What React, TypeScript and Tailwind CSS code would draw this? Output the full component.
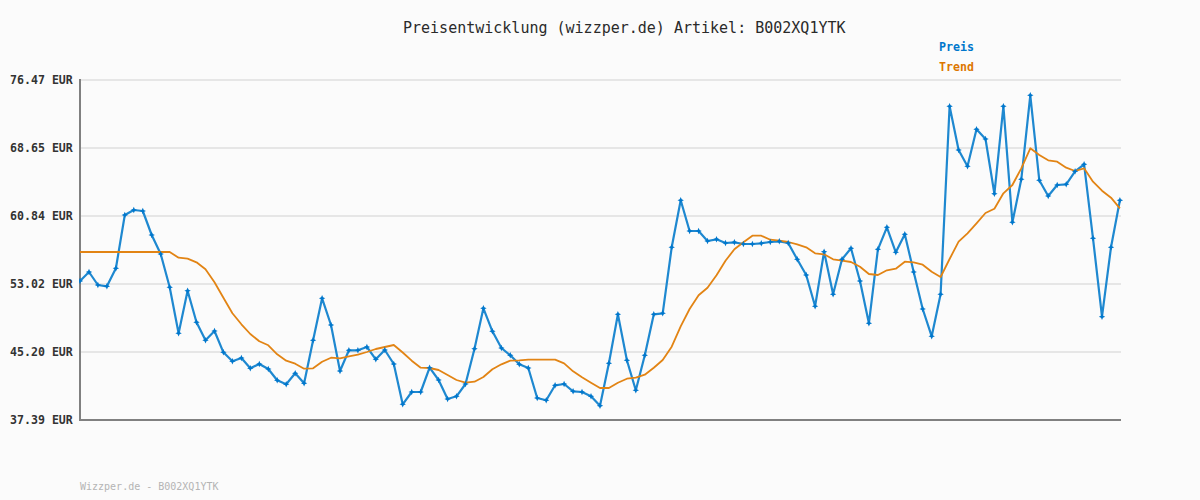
const priceY = [
  281, 272, 285, 286.3, 268.3, 215, 210, 211, 235, 254, 287.3, 333.3, 290.7, 322.3, 340.3, 331, 352.3, 361.3, 358, 368.3,
  364, 369, 380.3, 384.3, 373.3, 383.3, 340.3, 298.3, 325, 371, 350.3, 350.3, 347, 359.3, 350, 364, 404.3, 392, 392, 367.7,
  380, 399, 396.3, 384, 348.7, 308.3, 331.3, 348, 355.3, 364.3, 368, 398, 400.3, 385.3, 384, 391.3, 392, 396.3, 405.7, 363.3,
  314.3, 360.3, 390.3, 355.3, 314.3, 313.3, 247.3, 200.3, 231, 231, 241, 239.3, 243, 242.3, 244, 244, 243.3, 242, 241.3, 243,
  259.3, 275, 306.3, 251.7, 294.3, 259.3, 248.3, 281, 323.3, 249.3, 227.3, 252.3, 234.3, 272, 309, 336.3, 294.3, 106.3, 150, 166.3,
  129.3, 139, 193.7, 106.3, 222.3, 179.3, 95.3, 180.3, 196, 185, 184.3, 171.3, 164.3, 238.3, 316.7, 247.3, 200.3,
];

const trendY = [
  252, 252, 252, 252, 252, 252, 252, 252, 252, 252, 252, 257.7, 258.7, 262.3, 269.3, 282.3, 297.7, 313.3, 324.3, 334,
  341.3, 345.3, 354.3, 360.7, 363.7, 368.7, 368.3, 361.7, 357.7, 358.3, 356.3, 354.7, 352, 349, 347, 345, 352.5, 360.7, 367.7, 368,
  370, 375, 380, 382.7, 381.7, 377, 369.3, 364.3, 360.7, 360.3, 359.7, 359.7, 359.7, 359.7, 363.3, 371.3, 377.3, 382.7, 388, 388,
  382.7, 378.7, 377.7, 374.7, 367.7, 360, 346.7, 326.3, 309, 295.3, 287.7, 275.3, 260.7, 249.3, 242.3, 235.7, 235.7, 239.7, 240.7, 242,
  244.3, 247.3, 253.3, 254.3, 259.3, 260.7, 262, 266.7, 274, 275, 270.3, 268.7, 261.7, 262.3, 264.7, 271.7, 277, 259, 241.7, 233.3,
  223.3, 213, 208.7, 193.3, 185, 168.3, 148.3, 155, 160.3, 161.7, 167.7, 171, 168.3, 181.7, 190.7, 197.7, 208.3,
];

const gridLines = [80, 148, 216, 284, 352];
const axisLabels = ["76.47 EUR", "68.65 EUR", "60.84 EUR", "53.02 EUR", "45.20 EUR", "37.39 EUR"];

const xAt = (i: number) => 80 + i * 8.965;
const toPoints = (ys: number[]) => ys.map((y, i) => `${xAt(i).toFixed(1)},${y}`).join(" ");

function PriceChart() {
  return (
    <svg width={1045} height={354} viewBox="79 73 1045 354" className="block">
      {gridLines.map((y) => (
        <line key={y} x1={81} x2={1121} y1={y} y2={y} stroke="#e6e6e6" strokeWidth={2} />
      ))}
      <line x1={80} x2={80} y1={79} y2={421} stroke="#808080" strokeWidth={2} />
      <line x1={79} x2={1121} y1={420} y2={420} stroke="#808080" strokeWidth={2} />
      <polyline points={toPoints(priceY)} fill="none" stroke="#1e88d0" strokeWidth={2.2} strokeLinejoin="round" />
      <polyline points={toPoints(trendY)} fill="none" stroke="#e28414" strokeWidth={1.8} strokeLinejoin="round" />
      {priceY.map((y, i) => (
        <path
          key={i}
          d={`M${xAt(i).toFixed(1)} ${y - 3.2}l1 2.2 2.2 1-2.2 1-1 2.2-1-2.2-2.2-1 2.2-1z`}
          fill="#0077cc"
        />
      ))}
    </svg>
  );
}

export default function App() {
  return (
    <div className="w-[1200px] h-[500px] bg-[#fbfbfb] font-['DejaVu_Sans_Mono','Liberation_Mono',monospace] overflow-hidden">
      <div className="pt-5 pl-[403px] h-[37px] text-[15px] leading-4 text-[#2a2a2a]">
        Preisentwicklung (wizzper.de) Artikel: B002XQ1YTK
      </div>
      <div className="h-9 pl-[939px] text-[11.6px] leading-5 font-bold">
        <div className="text-[#0077cc]">Preis</div>
        <div className="text-[#dd7700]">Trend</div>
      </div>
      <div className="flex">
        <div className="w-[79px] h-[354px] pl-[10px] flex flex-col justify-between text-[11.6px] leading-[14px] font-bold text-[#333333]">
          {axisLabels.map((label) => (
            <div key={label}>{label}</div>
          ))}
        </div>
        <PriceChart />
      </div>
      <div className="mt-[54px] pl-20 text-[10px] leading-3 text-[#b4b4b4]">Wizzper.de - B002XQ1YTK</div>
    </div>
  );
}
